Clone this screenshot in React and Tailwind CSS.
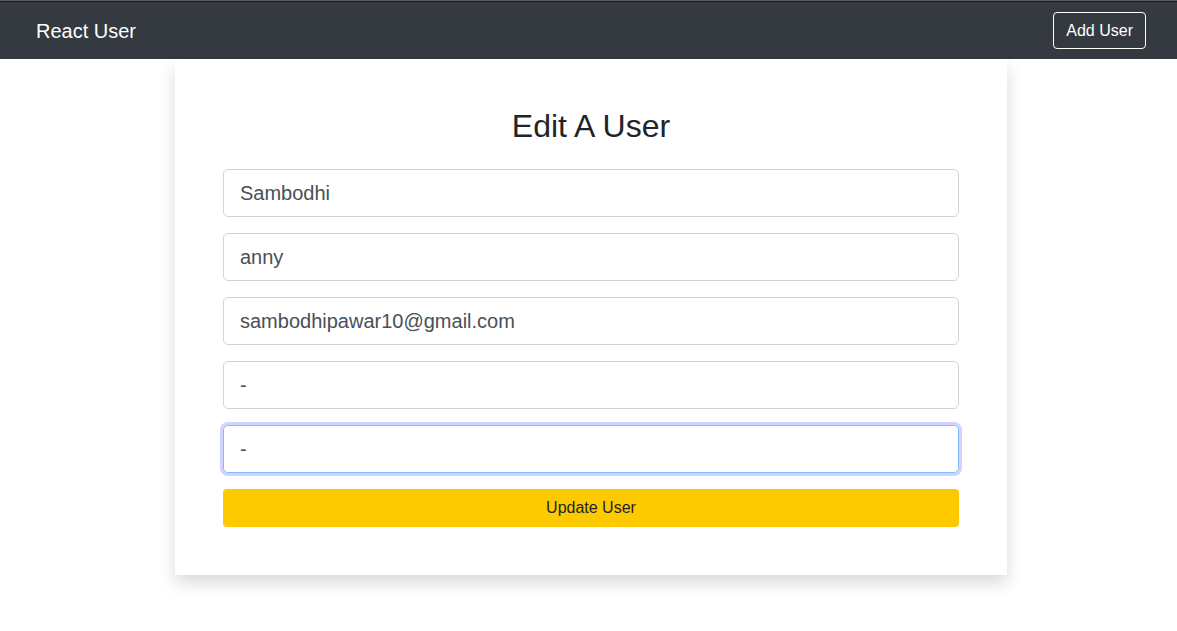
export default function App() {
  const fields = [
    { value: 'Sambodhi' },
    { value: 'anny' },
    { value: 'sambodhipawar10@gmail.com' },
    { value: '-' },
    { value: '-', focused: true },
  ];

  return (
    <div className="min-h-[631px] bg-white font-['Liberation_Sans',Arial,sans-serif] text-[#212529]">
      <div className="h-px bg-[#5b5b5b]" />
      <div className="h-px bg-[#1e1e1e]" />
      <nav className="flex h-[57px] items-center justify-between bg-[#343a40] pl-9 pr-[31px]">
        <span className="text-[20px] text-white">React User</span>
        <button className="h-[37px] rounded-[4px] border border-white px-3 text-[16px] text-white">
          Add User
        </button>
      </nav>

      <div className="ml-[175px] w-[832px] bg-white p-12 shadow-[0_8px_16px_rgba(0,0,0,0.15)]">
        <h2 className="mb-6 text-center text-[32px] leading-[1.2] font-normal">Edit A User</h2>
        <form className="flex flex-col gap-4" onSubmit={(e) => e.preventDefault()}>
          {fields.map((f, i) => (
            <input
              key={i}
              defaultValue={f.value}
              className={
                f.focused
                  ? 'h-12 rounded-[5px] border border-[#80bdff] px-4 text-[20px] text-[#495057] outline-none shadow-[0_0_0_3px_rgba(120,130,255,0.35)]'
                  : 'h-12 rounded-[5px] border border-[#ced4da] px-4 text-[20px] text-[#495057] outline-none'
              }
            />
          ))}
          <button className="h-[38px] rounded-[4px] bg-[#fdca00] text-[16px] text-[#212529]">
            Update User
          </button>
        </form>
      </div>
    </div>
  );
}
